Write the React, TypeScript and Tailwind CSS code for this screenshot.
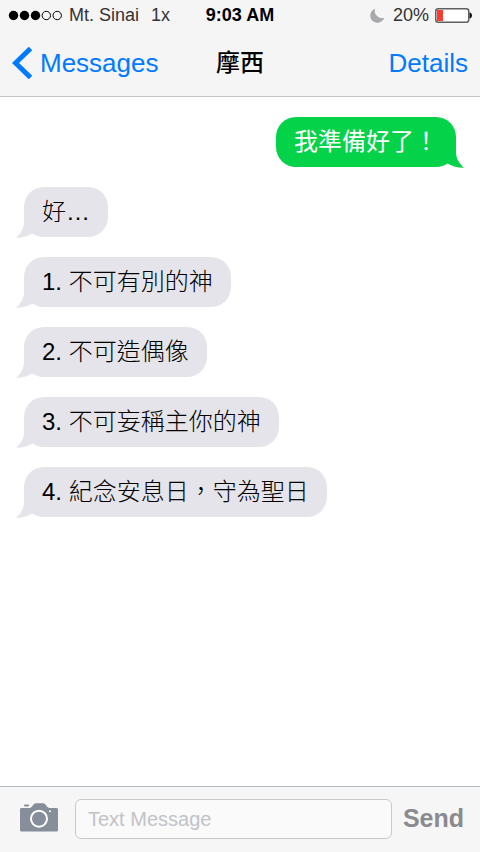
type Message = {
  id: number;
  text: string;
  sent?: boolean;
};

const messages: Message[] = [
  { id: 1, text: "我準備好了！", sent: true },
  { id: 2, text: "好…" },
  { id: 3, text: "1. 不可有別的神" },
  { id: 4, text: "2. 不可造偶像" },
  { id: 5, text: "3. 不可妄稱主你的神" },
  { id: 6, text: "4. 紀念安息日，守為聖日" },
];

function SignalDots() {
  return (
    <svg width="54" height="12" viewBox="0 0 54 12" aria-hidden="true">
      <circle cx="5.5" cy="6.5" r="4.7" />
      <circle cx="16.5" cy="6.5" r="4.7" />
      <circle cx="27.5" cy="6.5" r="4.7" />
      <circle cx="38.3" cy="6.5" r="4.2" fill="none" stroke="#000" />
      <circle cx="49.2" cy="6.5" r="4.2" fill="none" stroke="#000" />
    </svg>
  );
}

function MoonIcon() {
  return (
    <svg width="15" height="15" viewBox="0 0 15 15" aria-hidden="true">
      <path d="M5 .8A7.2 7.2 0 1 0 14.3 9.8 7.4 7.4 0 0 1 5 .8Z" fill="#a9a9ad" />
    </svg>
  );
}

function BatteryIcon() {
  return (
    <svg width="37" height="15" viewBox="0 0 37 15" aria-hidden="true">
      <rect x=".75" y=".75" width="33" height="13.5" rx="2.5" fill="#fff" stroke="#5f5f5f" strokeWidth="1.5" />
      <rect x="2" y="2" width="6" height="11" fill="#ff3b30" />
      <path d="M34.5 4.5c1.6.2 2.5 1.5 2.5 3S36.1 10.3 34.5 10.5Z" fill="#111" />
    </svg>
  );
}

function CameraIcon() {
  return (
    <svg width="38" height="29" viewBox="0 0 38 29" aria-hidden="true">
      <path
        d="M1.5 5H8c2.5 0 3.6-.9 4.6-2.3C13.6 1.3 14.4.2 16 .2h7c1.6 0 2.4 1.1 3.4 2.5C27.4 4.1 28.500 5 31 5h5.500c.9 0 1.500.6 1.500 1.500V27c0 .9-.6 1.500-1.500 1.500h-35C.6 28.500 0 27.900 0 27V6.500C0 5.600.6 5 1.500 5Z"
        fill="#868e99"
      />
      <rect x="4" y="1.5" width="5" height="2" rx="1" fill="#868e99" />
      <circle cx="19" cy="15.7" r="8" fill="none" stroke="#fff" strokeWidth="2" />
      <circle cx="30" cy="8.3" r="1" fill="#fff" />
    </svg>
  );
}

function StatusBar() {
  return (
    <div className="grid h-[30px] grid-cols-[1fr_auto_1fr] items-center px-2 text-lg leading-none text-[#333]">
      <div className="flex items-center">
        <SignalDots />
        <span className="ml-[7px]">Mt. Sinai</span>
        <span className="ml-3">1x</span>
      </div>
      <time className="font-bold text-black">9:03 AM</time>
      <div className="flex items-center justify-end">
        <MoonIcon />
        <span className="ml-2 mr-1.5">20%</span>
        <BatteryIcon />
      </div>
    </div>
  );
}

function Bubble({ text, sent }: Message) {
  return (
    <li
      className={
        sent
          ? "relative self-end rounded-[20px] bg-[#04d248] px-[18px] py-[7px] font-normal text-white"
          : "relative self-start rounded-[20px] bg-[#e5e4ea] px-[18px] py-[7px] font-light text-black"
      }
    >
      {text}
      <svg
        className={
          sent
            ? "absolute -bottom-px -right-2 -scale-x-100 fill-[#04d248]"
            : "absolute -bottom-px -left-2 fill-[#e5e4ea]"
        }
        width="24"
        height="22"
        viewBox="0 0 24 22"
        aria-hidden="true"
      >
        <path d="M8 0V6C8 12 5.5 17 0 21.7 7 21.7 13 20 18 16.5L24 12V0Z" />
      </svg>
    </li>
  );
}

export default function App() {
  return (
    <div className="flex min-h-screen flex-col bg-white font-['Liberation_Sans','Noto_Sans_CJK_TC',sans-serif]">
      <header className="border-b border-[#c4c4c6] bg-[#f5f5f5]">
        <StatusBar />
        <nav className="grid h-[66px] grid-cols-[1fr_auto_1fr] items-center px-3 text-[26px] leading-none text-[#007aff]">
          <button type="button" className="flex items-center gap-2 justify-self-start">
            <svg width="20" height="32" viewBox="0 0 20 32" fill="none" aria-hidden="true">
              <path d="M18.5 1.5 3.5 16 18.5 30.5" stroke="#007aff" strokeWidth="5" />
            </svg>
            Messages
          </button>
          <h1 className="text-2xl font-medium text-black">摩西</h1>
          <button type="button" className="justify-self-end">
            Details
          </button>
        </nav>
      </header>

      <main className="grow px-6 py-5">
        <ul className="flex flex-col gap-5 text-2xl leading-9">
          {messages.map((message) => (
            <Bubble key={message.id} {...message} />
          ))}
        </ul>
      </main>

      <footer className="border-t border-[#b5bcc4] bg-[#f6f6f6]">
        <form className="flex items-center pt-3 pr-4 pb-[13px] pl-5">
          <button type="button" aria-label="Camera" className="pb-1">
            <CameraIcon />
          </button>
          <input
            type="text"
            aria-label="Text Message"
            placeholder="Text Message"
            className="ml-[17px] mr-[11px] h-10 min-w-0 grow rounded-md border border-[#c9c9cc] bg-[#fafafa] px-3 text-xl placeholder:text-[#c2c2c8]"
          />
          <button type="button" className="pb-0.5 text-[25px] leading-none font-bold text-[#8a8a8f]">
            Send
          </button>
        </form>
      </footer>
    </div>
  );
}
